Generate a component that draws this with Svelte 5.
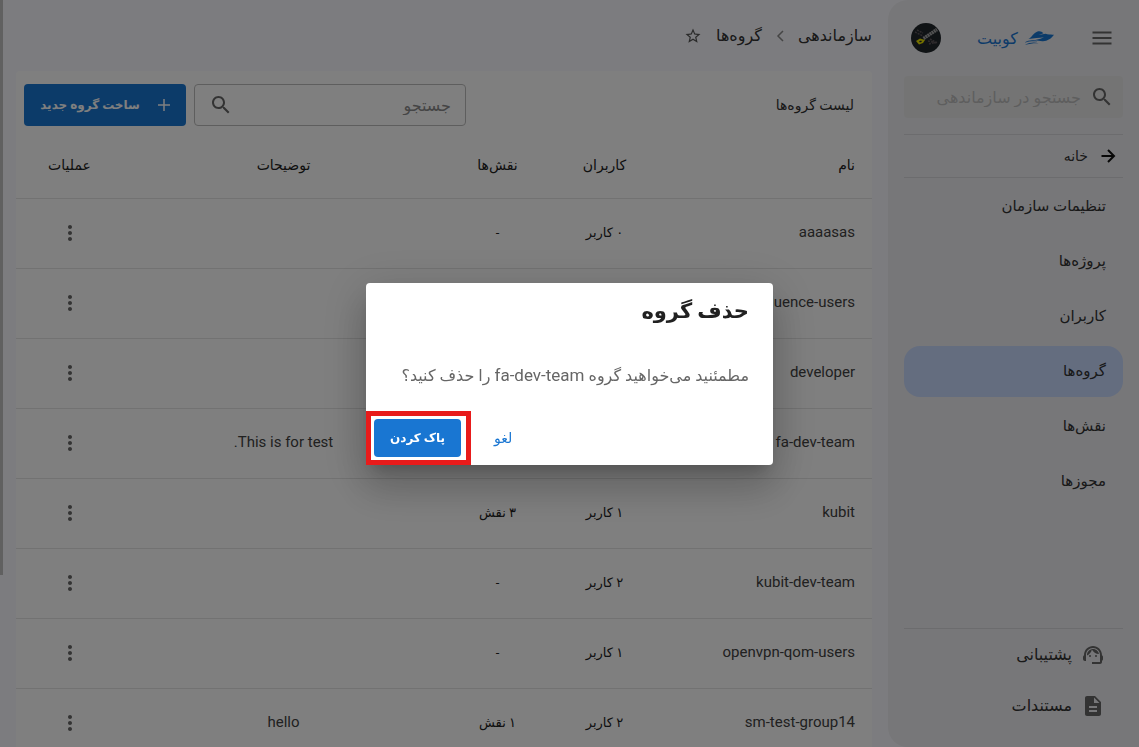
<script lang="ts">
  interface Group {
    name: string;
    users: string;
    roles: string;
    description?: string;
  }

  const navItems = ['تنظیمات سازمان', 'پروژه‌ها', 'کاربران', 'گروه‌ها', 'نقش‌ها', 'مجوزها'];
  const columns = ['نام', 'کاربران', 'نقش‌ها', 'توضیحات', 'عملیات'];

  const groups: Group[] = [
    { name: 'aaaasas', users: '۰ کاربر', roles: '-' },
    { name: 'confluence-users', users: '۱ کاربر', roles: '-' },
    { name: 'developer', users: '۱ کاربر', roles: '-' },
    { name: 'fa-dev-team', users: '۱ کاربر', roles: '-', description: 'This is for test.' },
    { name: 'kubit', users: '۱ کاربر', roles: '۳ نقش' },
    { name: 'kubit-dev-team', users: '۲ کاربر', roles: '-' },
    { name: 'openvpn-qom-users', users: '۱ کاربر', roles: '-' },
    { name: 'sm-test-group14', users: '۲ کاربر', roles: '۱ نقش', description: 'hello' }
  ];

  let activeItem = $state('گروه‌ها');
  let dialogOpen = $state(true);

  function closeDialog() {
    dialogOpen = false;
  }
</script>

{#snippet searchIcon()}
  <svg class="icon" viewBox="0 0 24 24" aria-hidden="true">
    <path d="M15.5 14h-.79l-.28-.27C15.41 12.59 16 11.11 16 9.5 16 5.91 13.09 3 9.5 3S3 5.91 3 9.5 5.91 16 9.5 16c1.61 0 3.09-.59 4.23-1.57l.27.28v.79l5 4.99L20.49 19l-4.99-5zm-6 0C7.01 14 5 11.99 5 9.5S7.01 5 9.5 5 14 7.01 14 9.5 11.99 14 9.5 14z" />
  </svg>
{/snippet}

<div class="layout" dir="rtl" lang="fa">
  <aside class="sidebar">
    <div class="brand-row">
      <button class="icon-button" aria-label="منو">
        <svg class="icon" viewBox="0 0 24 24"><path d="M2.500 18.500h19v-2h-19v2zm0-5.500h19v-2h-19v2zm0-7.500v2h19v-2h-19z" /></svg>
      </button>
      <a class="brand" href="#home">
        <svg class="brand-mark" viewBox="0 0 30 16" aria-hidden="true">
          <path d="M4.500 9C8 7 9.500 3 13.500 1.500c2.500-.8 4.500.2 6 1.800l-5 1.700 7-1.200c3 .7 5 1 8.500.9-2.500 3.800-6.500 6.300-11 6.500-4.500.1-7-1.200-11-.2C11 9.800 15 9.500 20 7.200 15 7.800 10 8 4.500 9z" />
          <path d="M.5 12.500C5 9.500 10 9.600 13.500 11.400c-4-.4-8-.2-13 1.100zM1 15c4.500-2.800 9.500-2.800 13.500-1.800C10 13 5.500 13.500 1 15z" />
        </svg>
        <span>کوبیت</span>
      </a>
      <button class="icon-button" aria-label="حساب کاربری">
        <svg class="avatar" viewBox="0 0 30 30">
          <circle cx="15" cy="15" r="15" fill="#20262b" />
          <g stroke="#5d5559" stroke-width="1.500" stroke-dasharray="2 1">
            <path d="M4 9l8 4M6 7l6 3M17 18l8 2M18 21l8-2M19 16l7 4" />
          </g>
          <path d="M12.500 15.500L26 6.500" stroke="#a5a5a5" stroke-width="3.500" stroke-dasharray="2 .5" />
          <path d="M5 18l4-2.500 5 1.500-2 3-4 1.500z" fill="#e8e000" />
          <path d="M8 18.500l2-1 1 1-2 1z" fill="#20262b" />
        </svg>
      </button>
    </div>

    <label class="side-search">
      {@render searchIcon()}
      <input type="search" placeholder="جستجو در سازماندهی" aria-label="جستجو در سازماندهی" />
    </label>

    <a class="home-link" href="#home">
      <svg viewBox="0 0 16 16" aria-hidden="true"><path d="M1.500 8h12.500M8 2l6 6-6 6" /></svg>
      <span>خانه</span>
    </a>

    <nav class="nav">
      {#each navItems as item}
        <button class="nav-item" class:active={item === activeItem} onclick={() => (activeItem = item)}>
          {item}
        </button>
      {/each}
    </nav>

    <div class="side-footer">
      <a href="#support">
        <svg class="icon" viewBox="0 0 24 24" aria-hidden="true">
          <path d="M21 12.220C21 6.730 16.740 3 12 3c-4.690 0-9 3.650-9 9.280-.6.340-1 .980-1 1.720v2c0 1.100.9 2 2 2h1v-6.100c0-3.870 3.130-7 7-7s7 3.130 7 7V19h-8v2h8c1.100 0 2-.9 2-2v-1.220c.59-.310 1-.920 1-1.640v-2.300c0-.7-.410-1.310-1-1.620z" />
          <circle cx="9" cy="13" r="1" />
          <circle cx="15" cy="13" r="1" />
          <path d="M18 11.030C17.520 8.180 15.040 6 12.050 6c-3.030 0-6.290 2.510-6.030 6.450 2.470-1.010 4.330-3.210 4.860-5.890 1.310 2.630 4 4.440 7.120 4.470z" />
        </svg>
        <span>پشتیبانی</span>
      </a>
      <a href="#docs">
        <svg class="icon" viewBox="0 0 24 24" aria-hidden="true">
          <path d="M14 2H6c-1.100 0-1.990.9-1.990 2L4 20c0 1.100.890 2 1.990 2H18c1.100 0 2-.9 2-2V8l-6-6zm2 16H8v-2h8v2zm0-4H8v-2h8v2zm-3-5V3.500L18.500 9H13z" />
        </svg>
        <span>مستندات</span>
      </a>
    </div>
  </aside>

  <main class="content">
    <div class="breadcrumb">
      <a href="#organization">سازماندهی</a>
      <svg class="chevron" viewBox="0 0 8 12" aria-hidden="true"><path d="M7 1L2 6l5 5" /></svg>
      <span>گروه‌ها</span>
      <button class="icon-button" aria-label="افزودن به علاقه‌مندی‌ها">
        <svg class="star" viewBox="0 0 24 24">
          <path d="M22 9.240l-7.190-.620L12 2 9.190 8.630 2 9.240l5.460 4.730L5.820 21 12 17.270 18.180 21l-1.630-7.030L22 9.240zM12 15.400l-3.760 2.270 1-4.280-3.320-2.880 4.380-.380L12 6.100l1.710 4.040 4.380.380-3.320 2.880 1 4.280L12 15.400z" />
        </svg>
      </button>
    </div>

    <section class="card">
      <div class="toolbar">
        <h1>لیست گروه‌ها</h1>
        <label class="search-box">
          <input type="search" placeholder="جستجو" aria-label="جستجو" />
          {@render searchIcon()}
        </label>
        <button class="primary create">
          <svg viewBox="0 0 12 12" aria-hidden="true"><path d="M6 0v12M0 6h12" /></svg>
          <span>ساخت گروه جدید</span>
        </button>
      </div>

      <table>
        <thead>
          <tr>
            {#each columns as column}
              <th scope="col">{column}</th>
            {/each}
          </tr>
        </thead>
        <tbody>
          {#each groups as group}
            <tr>
              <td class="latin">{group.name}</td>
              <td>{group.users}</td>
              <td>{group.roles}</td>
              <td class="latin">{group.description ?? ''}</td>
              <td class="actions">
                <button class="icon-button" aria-label="عملیات {group.name}">
                  <svg class="icon" viewBox="0 0 24 24">
                    <path d="M12 8c1.100 0 2-.9 2-2s-.9-2-2-2-2 .9-2 2 .9 2 2 2zm0 2c-1.100 0-2 .9-2 2s.9 2 2 2 2-.9 2-2-.9-2-2-2zm0 6c-1.100 0-2 .9-2 2s.9 2 2 2 2-.9 2-2-.9-2-2-2z" />
                  </svg>
                </button>
              </td>
            </tr>
          {/each}
        </tbody>
      </table>
    </section>
  </main>

  <div class="scroll-track"><div class="scroll-thumb"></div></div>

  {#if dialogOpen}
    <div class="backdrop">
      <div class="dialog" role="dialog" aria-modal="true" aria-labelledby="dialog-title">
        <h2 id="dialog-title">حذف گروه</h2>
        <p>مطمئنید می‌خواهید گروه <span class="group-name">fa-dev-team</span> را حذف کنید؟</p>
        <div class="dialog-actions">
          <button class="cancel" onclick={closeDialog}>لغو</button>
          <div class="highlight">
            <button class="primary" onclick={closeDialog}>پاک کردن</button>
          </div>
        </div>
      </div>
    </div>
  {/if}
</div>

<style>
  :global(body) {
    margin: 0;
    overflow: hidden;
  }

  .layout {
    display: flex;
    height: 100vh;
    overflow: hidden;
    background: #f9f9fe;
    color: #333;
    font-family: Roboto, 'DejaVu Sans', sans-serif;
    font-size: 16px;
  }

  button,
  input {
    font: inherit;
    color: inherit;
  }

  button {
    padding: 0;
    border: 0;
    background: none;
    cursor: pointer;
  }

  input {
    min-width: 0;
    padding: 0;
    border: 0;
    outline: 0;
    background: none;
  }

  a {
    color: inherit;
    text-decoration: none;
  }

  .icon {
    width: 24px;
    height: 24px;
    flex: none;
    fill: #666;
  }

  .icon-button {
    display: inline-flex;
    align-items: center;
    justify-content: center;
  }

  .sidebar {
    display: flex;
    flex-direction: column;
    flex: none;
    box-sizing: border-box;
    width: 251px;
    padding: 16px 16px 16px;
    border-radius: 20px 0 0 20px;
    background: #eeeef2;
  }

  .brand-row {
    display: flex;
    align-items: center;
    justify-content: space-between;
    height: 44px;
    padding: 0 9px 0 7px;
  }

  .brand {
    display: flex;
    align-items: center;
    gap: 6px;
    color: #1976d2;
  }

  .brand-mark {
    width: 30px;
    height: 16px;
    fill: #1976d2;
  }

  .avatar {
    width: 30px;
    height: 30px;
  }

  .side-search {
    display: flex;
    align-items: center;
    gap: 9px;
    height: 42px;
    margin-top: 16px;
    padding: 0 9px;
    border-radius: 4px;
    background: #e9e9e9;
  }

  .side-search input {
    flex: 1;
  }

  .side-search input::placeholder {
    color: #bdbdbd;
    opacity: 1;
  }

  .home-link {
    display: flex;
    align-items: center;
    gap: 12px;
    height: 42px;
    margin-top: 16px;
    padding: 0 7px;
    border-top: 1px solid #d8d8dc;
    border-bottom: 1px solid #d8d8dc;
    font-size: 14px;
  }

  .home-link svg {
    width: 16px;
    height: 16px;
    fill: none;
    stroke: #111;
    stroke-width: 2;
  }

  .nav {
    display: flex;
    flex-direction: column;
    flex: 1;
    gap: 4px;
    margin-top: 3px;
  }

  .nav-item {
    height: 51px;
    padding: 0 17px 2px;
    border-radius: 16px;
    font-size: 15px;
    text-align: start;
  }

  .nav-item.active {
    background: #c8daff;
  }

  .side-footer {
    border-top: 1px solid #d8d8dc;
  }

  .side-footer a {
    display: flex;
    align-items: center;
    gap: 9px;
    height: 51px;
    padding: 0 18px;
  }

  .content {
    flex: 1;
    min-width: 0;
    padding: 0 16px 0 13px;
  }

  .breadcrumb {
    display: flex;
    align-items: center;
    height: 71px;
    gap: 14px;
  }

  .chevron {
    width: 8px;
    height: 12px;
    fill: none;
    stroke: #8a8a8a;
    stroke-width: 1.5;
  }

  .star {
    width: 18px;
    height: 18px;
    fill: #555;
  }

  .card {
    border-radius: 4px;
    background: #fff;
  }

  .toolbar {
    display: flex;
    align-items: center;
    gap: 8px;
    padding: 13px 18px 9px 8px;
  }

  h1 {
    flex: 1;
    margin: 0;
    font-size: 14px;
    font-weight: 400;
  }

  .search-box {
    display: flex;
    align-items: center;
    box-sizing: border-box;
    width: 272px;
    height: 42px;
    padding: 0 14px;
    border: 1px solid #bdbdbd;
    border-radius: 4px;
  }

  .search-box input {
    flex: 1;
  }

  .search-box input::placeholder {
    color: #8a8a8a;
    opacity: 1;
  }

  .primary {
    height: 38px;
    padding: 0 16px;
    border-radius: 4px;
    background: #1976d2;
    color: #fff;
    font-size: 12px;
    font-weight: 700;
  }

  .create {
    display: flex;
    align-items: center;
    justify-content: center;
    gap: 18px;
    width: 162px;
    height: 42px;
    white-space: nowrap;
  }

  .create svg {
    width: 12px;
    height: 12px;
    flex: none;
    stroke: #fff;
    stroke-width: 1.5;
  }

  table {
    width: 100%;
    border-collapse: collapse;
    table-layout: fixed;
    color: #212121;
    font-size: 13px;
  }

  th,
  td {
    box-sizing: border-box;
    height: 70px;
    padding: 0 17px 2px;
    border-bottom: 1px solid #e4e4e4;
    font-weight: 400;
    text-align: center;
  }

  th {
    height: 63px;
    font-size: 14px;
  }

  th:first-child,
  td:first-child {
    width: 25%;
    text-align: start;
  }

  th:nth-child(2),
  th:nth-child(3),
  th:nth-child(5) {
    width: 12.5%;
  }

  td.latin {
    color: #424242;
    font-size: 15px;
  }

  td.actions {
    padding-bottom: 0;
  }

  td.actions button {
    vertical-align: middle;
  }

  .scroll-track {
    flex: none;
    width: 3px;
  }

  .scroll-thumb {
    height: 77%;
    background: #c1c1c1;
  }

  .backdrop {
    position: fixed;
    inset: 0;
    display: flex;
    align-items: center;
    justify-content: center;
    background: rgba(0, 0, 0, 0.5);
  }

  .dialog {
    width: 407px;
    border-radius: 4px;
    background: #fff;
    box-shadow:
      0 11px 15px -7px rgba(0, 0, 0, 0.2),
      0 24px 38px 3px rgba(0, 0, 0, 0.14),
      0 9px 46px 8px rgba(0, 0, 0, 0.12);
  }

  h2 {
    margin: 0;
    padding: 0 24px;
    color: #212121;
    font-size: 21px;
    font-weight: 700;
    line-height: 56px;
  }

  .dialog p {
    margin: 0;
    padding: 20px 24px 19px;
    color: #666;
    line-height: 32px;
    white-space: nowrap;
  }

  .group-name {
    font-size: 17px;
  }

  .dialog-actions {
    display: flex;
    align-items: center;
    justify-content: flex-end;
    gap: 16px;
  }

  .cancel {
    height: 38px;
    min-width: 32px;
    color: #1976d2;
    font-size: 14px;
  }

  .highlight {
    padding: 3px 5px 3px 3px;
    border: 5px solid #e81b1b;
  }
</style>
